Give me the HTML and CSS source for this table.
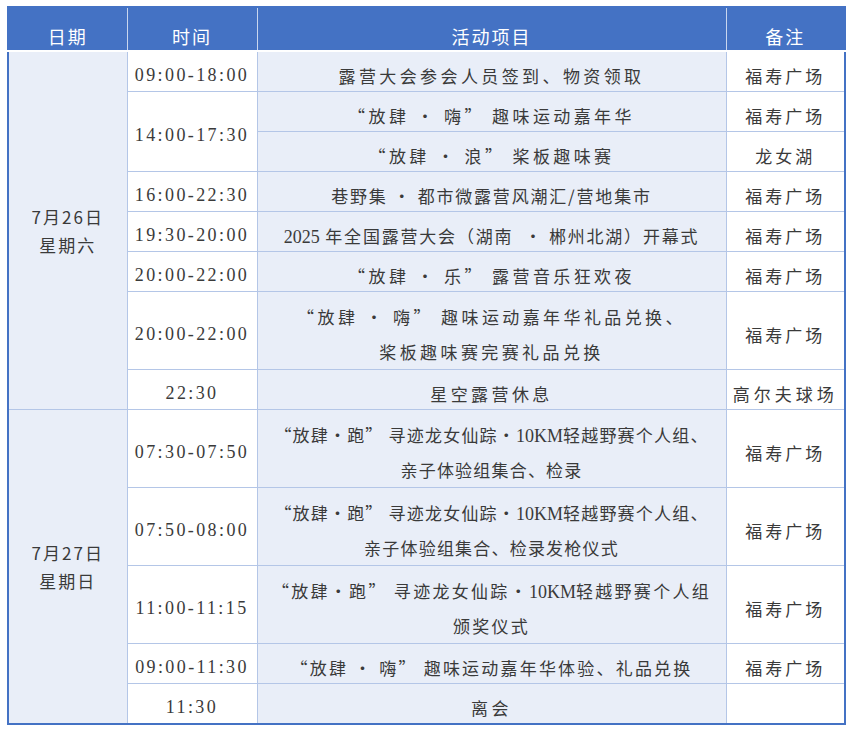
FILE: index.html
```html
<!DOCTYPE html>
<html lang="zh-CN">
<head>
<meta charset="utf-8">
<title>活动日程</title>
<link rel="stylesheet" href="styles.css">
</head>
<body>
<table class="schedule">
  <colgroup>
    <col class="c-date"><col class="c-time"><col class="c-act"><col class="c-note">
  </colgroup>
  <thead>
    <tr><th>日期</th><th>时间</th><th>活动项目</th><th>备注</th></tr>
  </thead>
  <tbody>
    <tr>
      <td class="date" rowspan="8"><div>7月26日</div><div>星期六</div></td>
      <td class="time">09:00-18:00</td>
      <td class="act wide">露营大会参会人员签到、物资领取</td>
      <td class="note">福寿广场</td>
    </tr>
    <tr>
      <td class="time" rowspan="2">14:00-17:30</td>
      <td class="act wide">“放肆 • 嗨” 趣味运动嘉年华</td>
      <td class="note">福寿广场</td>
    </tr>
    <tr>
      <td class="act wide">“放肆 • 浪” 桨板趣味赛</td>
      <td class="note">龙女湖</td>
    </tr>
    <tr>
      <td class="time">16:00-22:30</td>
      <td class="act mid">巷野集 • 都市微露营风潮汇/营地集市</td>
      <td class="note">福寿广场</td>
    </tr>
    <tr>
      <td class="time">19:30-20:00</td>
      <td class="act mid"><span class="lat">2025</span> 年全国露营大会（湖南 &nbsp;• 郴州北湖）开幕式</td>
      <td class="note">福寿广场</td>
    </tr>
    <tr>
      <td class="time">20:00-22:00</td>
      <td class="act wide">“放肆 • 乐” 露营音乐狂欢夜</td>
      <td class="note">福寿广场</td>
    </tr>
    <tr>
      <td class="time">20:00-22:00</td>
      <td class="act wide two">“放肆 • 嗨” 趣味运动嘉年华礼品兑换、<br>桨板趣味赛完赛礼品兑换</td>
      <td class="note">福寿广场</td>
    </tr>
    <tr>
      <td class="time">22:30</td>
      <td class="act wide">星空露营休息</td>
      <td class="note long">高尔夫球场</td>
    </tr>
    <tr>
      <td class="date" rowspan="5"><div>7月27日</div><div>星期日</div></td>
      <td class="time">07:30-07:50</td>
      <td class="act tight two">“放肆•跑” 寻迹龙女仙踪•<span class="lat">10KM</span>轻越野赛个人组、<br>亲子体验组集合、检录</td>
      <td class="note">福寿广场</td>
    </tr>
    <tr>
      <td class="time">07:50-08:00</td>
      <td class="act tight two">“放肆•跑” 寻迹龙女仙踪•<span class="lat">10KM</span>轻越野赛个人组、<br>亲子体验组集合、检录发枪仪式</td>
      <td class="note">福寿广场</td>
    </tr>
    <tr>
      <td class="time">11:00-11:15</td>
      <td class="act loose two">“放肆•跑” 寻迹龙女仙踪•<span class="lat">10KM</span>轻越野赛个人组<br>颁奖仪式</td>
      <td class="note">福寿广场</td>
    </tr>
    <tr>
      <td class="time">09:00-11:30</td>
      <td class="act mid2">“放肆 • 嗨” 趣味运动嘉年华体验、礼品兑换</td>
      <td class="note">福寿广场</td>
    </tr>
    <tr>
      <td class="time">11:30</td>
      <td class="act wide">离会</td>
      <td class="note"></td>
    </tr>
  </tbody>
</table>
</body>
</html>
```

FILE: styles.css
```css
body {
  margin: 0;
  padding: 6px 0 0 7px;
  background: #ffffff;
}

.schedule {
  border-collapse: collapse;
  table-layout: fixed;
  width: 837px;
  border: 2px solid #4472c4;
  font-family: "Noto Sans CJK SC", sans-serif;
  font-size: 17px;
  color: #3a3a3a;
}

.c-date { width: 119px; }
.c-time { width: 130px; }
.c-act { width: 469px; }
.c-note { width: 119px; }

.schedule th {
  height: 44px;
  padding: 13px 0 0;
  line-height: 28px;
  background: #4472c4;
  color: #ffffff;
  font-weight: normal;
  font-size: 18px;
  letter-spacing: 2px;
  border-left: 1px solid #c9d6ef;
  border-right: 1px solid #c9d6ef;
  border-bottom: 2px solid #ffffff;
  box-sizing: border-box;
}

.schedule td {
  border: 1px solid #b4c6e7;
  padding: 8px 0 0;
  line-height: 31px;
  text-align: center;
  vertical-align: middle;
  white-space: nowrap;
}

.schedule td.two {
  padding: 7px 0 0;
  line-height: 35px;
}

.schedule td.date {
  padding: 0;
  line-height: 28px;
  letter-spacing: 2px;
}

.date, .act {
  background: #e9eef8;
}

.time, .note {
  background: #ffffff;
}

.time {
  font-family: "Liberation Serif", serif;
  font-size: 18px;
  letter-spacing: 2.4px;
}

.lat {
  font-family: "Liberation Serif", serif;
  font-size: 18px;
  line-height: 1;
  letter-spacing: 0;
}

.wide { letter-spacing: 3.4px; }
.mid { letter-spacing: 1.8px; }
.mid2 { letter-spacing: 2.2px; }
.tight { letter-spacing: 1.2px; }
.loose { letter-spacing: 2.3px; }

.note { letter-spacing: 3px; }
.note.long { letter-spacing: 4px; }
```
